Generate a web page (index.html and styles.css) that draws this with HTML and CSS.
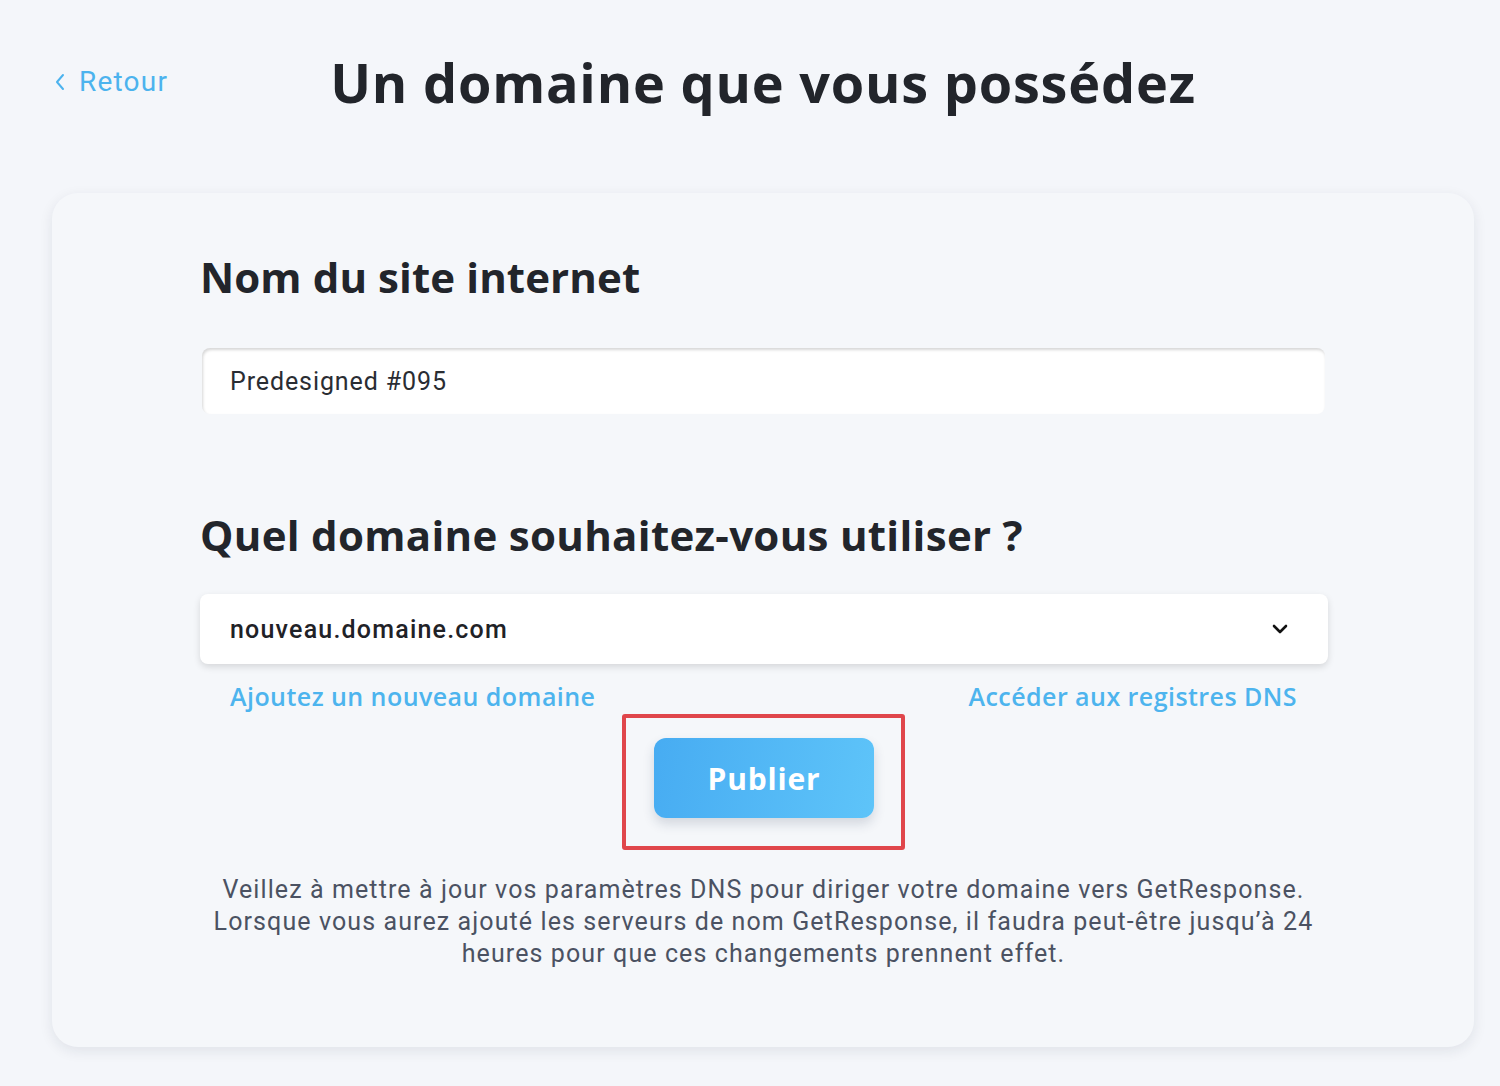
FILE: index.html
```
<!DOCTYPE html>
<html lang="fr">
    <head>
        <meta charset="UTF-8">
        <meta name="viewport" content="width=device-width, initial-scale=1.0">
        <title>Un domaine que vous possédez</title>
        <link rel="stylesheet" href="styles.css">
    </head>
    <body>
        <div id="page">
            <header id="header">
                <a href="#" id="back">
                    <svg width="12" height="18" viewBox="0 0 12 18"><path d="M9 2 L3 9 L9 16" fill="none" stroke="currentColor" stroke-width="2" stroke-linecap="round" stroke-linejoin="round"/></svg>
                    Retour
                </a>
                <h1 id="title">Un domaine que vous possédez</h1>
            </header>

            <main id="card">
                <h2 class="label">Nom du site internet</h2>
                <div class="field field-input">Predesigned #095</div>

                <h2 class="label label-domain">Quel domaine souhaitez-vous utiliser ?</h2>
                <div class="field field-select">
                    <span>nouveau.domaine.com</span>
                    <svg width="18" height="12" viewBox="0 0 18 12"><path d="M3 3 L9 9 L15 3" fill="none" stroke="#111" stroke-width="2.6" stroke-linecap="round" stroke-linejoin="round"/></svg>
                </div>
                <div class="links">
                    <a href="#">Ajoutez un nouveau domaine</a>
                    <a href="#">Accéder aux registres DNS</a>
                </div>

                <div class="actions">
                    <div class="highlight">
                        <button class="btn-publish">Publier</button>
                    </div>
                </div>

                <p class="note">Veillez à mettre à jour vos paramètres DNS pour diriger votre domaine vers GetResponse. Lorsque vous aurez ajouté les serveurs de nom GetResponse, il faudra peut-être jusqu’à 24 heures pour que ces changements prennent effet.</p>
            </main>
        </div>
    </body>
</html>
```

FILE: styles.css
```
*{
    box-sizing: border-box;
}

body{
    margin: 0;
    background: #f4f6fa;
    font-family: Roboto, Arial, sans-serif;
    color: #24272d;
}

a{
    text-decoration: none;
}

#page{
    padding: 0 26px 38px 52px;
}

#header{
    display: grid;
    grid-template-columns: 1fr auto 1fr;
    align-items: center;
    height: 193px;
    padding-bottom: 30px;
}

#back{
    display: flex;
    align-items: center;
    gap: 13px;
    padding-left: 2px;
    color: #4cb3ee;
    font-size: 28px;
    letter-spacing: 1.2px;
}

#title{
    margin: 0;
    font-family: "Open Sans", sans-serif;
    font-weight: 700;
    font-size: 54px;
    letter-spacing: .8px;
    color: #22252b;
}

#card{
    background: #f5f7fa;
    border-radius: 26px;
    box-shadow: 0 4px 14px rgba(20, 30, 50, .09);
    padding: 56px 149px 77px 150px;
}

.label{
    margin: 0 0 43px -2px;
    font-family: "Open Sans", sans-serif;
    font-weight: 700;
    font-size: 42px;
    line-height: 56px;
    letter-spacing: .1px;
    color: #22252b;
}

.label-domain{
    margin-top: 93px;
    margin-bottom: 31px;
    letter-spacing: .3px;
}

.field{
    height: 66px;
    border-radius: 8px;
    background: #fff;
    font-size: 25px;
    padding: 0 28px;
    display: flex;
    align-items: center;
}

.field-input{
    box-shadow: inset 1px 2px 3px rgba(0, 0, 0, .16);
    color: #2a2d33;
    letter-spacing: .9px;
}

.field-select{
    height: 70px;
    margin: 0 -3px 0 -2px;
    justify-content: space-between;
    padding: 0 39px 0 30px;
    box-shadow: 0 3px 7px rgba(0, 0, 0, .13);
    font-weight: 500;
    letter-spacing: 1.2px;
    color: #1f2227;
}

.links{
    display: flex;
    justify-content: space-between;
    padding: 15px 28px 0;
}

.links a{
    font-family: "Open Sans", sans-serif;
    font-weight: 600;
    font-size: 25px;
    color: #4db4ee;
    letter-spacing: .45px;
}

.actions{
    display: flex;
    justify-content: center;
    margin-top: 1px;
}

.highlight{
    border: 4px solid #e0464b;
    border-radius: 3px;
    padding: 20px 27px 28px 28px;
}

.btn-publish{
    display: block;
    width: 220px;
    height: 80px;
    border: none;
    border-radius: 12px;
    background: linear-gradient(100deg, #47acf2, #5ec4f9);
    box-shadow: 0 6px 12px rgba(30, 50, 80, .16);
    color: #fff;
    font-family: "Open Sans", sans-serif;
    font-weight: 700;
    font-size: 30px;
    letter-spacing: .8px;
    cursor: pointer;
}

.note{
    max-width: 1112px;
    margin: 24px auto 0;
    text-align: center;
    font-size: 25px;
    line-height: 32px;
    letter-spacing: 1.1px;
    color: #4b5262;
}
```
